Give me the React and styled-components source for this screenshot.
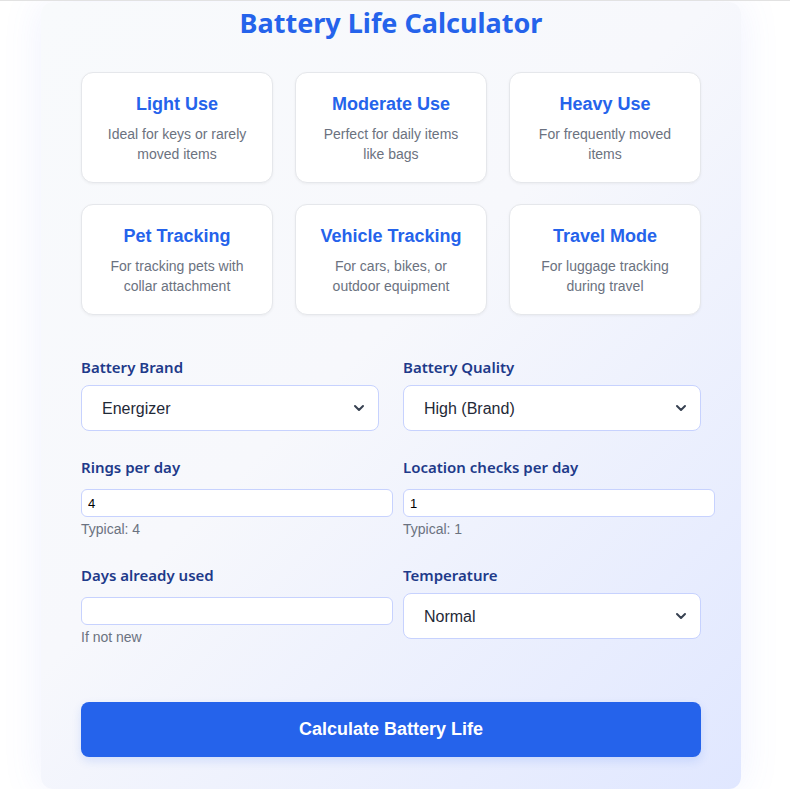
import React from 'react'
import styled, { createGlobalStyle } from 'styled-components'
import { ChevronDown } from 'lucide-react'

const BLUE = '#2563eb'
const NAVY = '#1e3a8a'
const MUTED = '#6b7280'
const FIELD_BORDER = '#c7d2fe'

const GlobalStyle = createGlobalStyle`
    html, body {
        margin: 0;
        padding: 0;
        background: #fff;
    }
    body {
        border-top: 1px solid #e2e2e2;
        font-family: "Liberation Sans", Arial, sans-serif;
    }
`

const Page = styled.div`
    padding: 1px 8px 0 0;
    display: flex;
    justify-content: center;
`

const Panel = styled.div`
    width: 700px;
    box-sizing: border-box;
    padding: 4px 40px 32px;
    border-radius: 12px;
    background: linear-gradient(135deg, #f8fafc 0%, #f7f8fc 45%, #e0e7ff 100%);
    box-shadow: 0 0 40px rgba(99, 120, 241, 0.10);
`

const Title = styled.h1`
    margin: 0 0 32px;
    text-align: center;
    font-family: "Noto Sans", "Open Sans", sans-serif;
    font-size: 27px;
    line-height: 34px;
    font-weight: 700;
    color: ${BLUE};
`

const Presets = styled.div`
    display: grid;
    grid-template-columns: repeat(3, 1fr);
    gap: 21px 22px;
    margin-bottom: 42px;
`

const PresetCard = styled.div`
    background: #fff;
    border: 1px solid #e5e7eb;
    border-radius: 12px;
    padding: 20px 16px 18px;
    text-align: center;
    box-shadow: 0 1px 3px rgba(0, 0, 0, 0.05);
    & h3 {
        margin: 0 0 9px;
        font-size: 18px;
        line-height: 22px;
        font-weight: 700;
        color: ${BLUE};
    }
    & p {
        margin: 0;
        font-size: 14px;
        line-height: 20px;
        color: ${MUTED};
    }
`

const Form = styled.div`
    display: grid;
    grid-template-columns: 1fr 1fr;
    align-items: start;
    column-gap: 24px;
    row-gap: 26px;
    margin-bottom: 55px;
`

const Field = styled.div`
    display: flex;
    flex-direction: column;
    min-width: 0;
`

const Label = styled.label`
    display: block;
    margin-bottom: 8px;
    font-family: "Noto Sans", "Open Sans", sans-serif;
    font-size: 15px;
    line-height: 20px;
    font-weight: 600;
    color: ${NAVY};
`

const SelectWrap = styled.div`
    position: relative;
    & svg {
        position: absolute;
        right: 12px;
        top: 50%;
        transform: translateY(-50%);
        pointer-events: none;
        color: #374151;
    }
`

const Select = styled.select`
    appearance: none;
    width: 100%;
    height: 46px;
    box-sizing: border-box;
    padding: 0 36px 0 20px;
    border: 1px solid ${FIELD_BORDER};
    border-radius: 8px;
    background: #fff;
    font-family: "Liberation Sans", Arial, sans-serif;
    font-size: 16px;
    color: #1f2937;
    outline: none;
`

const NumberInput = styled.input`
    display: block;
    align-self: flex-start;
    width: 298px;
    height: 26px;
    margin-top: 4px;
    padding: 0 6px;
    border: 1px solid ${FIELD_BORDER};
    border-radius: 6px;
    background: #fff;
    font-family: "Liberation Sans", Arial, sans-serif;
    font-size: 13px;
    color: #000;
    outline: none;
    box-sizing: content-box;
    -moz-appearance: textfield;
    &::-webkit-inner-spin-button, &::-webkit-outer-spin-button {
        -webkit-appearance: none;
        margin: 0;
    }
`

const Hint = styled.div`
    margin-top: 2px;
    font-size: 14px;
    line-height: 20px;
    color: ${MUTED};
`

const CalcButton = styled.button`
    display: block;
    width: 100%;
    height: 55px;
    border: none;
    border-radius: 8px;
    background: ${BLUE};
    color: #fff;
    font-family: "Liberation Sans", Arial, sans-serif;
    font-size: 18px;
    font-weight: 700;
    cursor: pointer;
    box-shadow: 0 4px 10px rgba(37, 99, 235, 0.15);
`

const presets = [
    { title: 'Light Use', text: 'Ideal for keys or rarely moved items' },
    { title: 'Moderate Use', text: 'Perfect for daily items like bags' },
    { title: 'Heavy Use', text: 'For frequently moved items' },
    { title: 'Pet Tracking', text: 'For tracking pets with collar attachment' },
    { title: 'Vehicle Tracking', text: 'For cars, bikes, or outdoor equipment' },
    { title: 'Travel Mode', text: 'For luggage tracking during travel' },
]

const SelectField = ({ label, options, value }) => (
    <Field>
        <Label>{label}</Label>
        <SelectWrap>
            <Select defaultValue={value}>
                {options.map(o => <option key={o}>{o}</option>)}
            </Select>
            <ChevronDown size={16} strokeWidth={3} />
        </SelectWrap>
    </Field>
)

const NumberField = ({ label, value, hint }) => (
    <Field>
        <Label>{label}</Label>
        <NumberInput type="number" defaultValue={value} />
        <Hint>{hint}</Hint>
    </Field>
)

const App = () => {
    return <>
        <GlobalStyle />
        <Page>
            <Panel>
                <Title>Battery Life Calculator</Title>
                <Presets>
                    {presets.map(p => (
                        <PresetCard key={p.title}>
                            <h3>{p.title}</h3>
                            <p>{p.text}</p>
                        </PresetCard>
                    ))}
                </Presets>
                <Form>
                    <SelectField label="Battery Brand" value="Energizer"
                        options={['Energizer', 'Duracell', 'Panasonic', 'Generic']} />
                    <SelectField label="Battery Quality" value="High (Brand)"
                        options={['High (Brand)', 'Medium', 'Low (Generic)']} />
                    <NumberField label="Rings per day" value="4" hint="Typical: 4" />
                    <NumberField label="Location checks per day" value="1" hint="Typical: 1" />
                    <NumberField label="Days already used" value="" hint="If not new" />
                    <SelectField label="Temperature" value="Normal"
                        options={['Cold', 'Normal', 'Hot']} />
                </Form>
                <CalcButton>Calculate Battery Life</CalcButton>
            </Panel>
        </Page>
    </>
}

export default App
